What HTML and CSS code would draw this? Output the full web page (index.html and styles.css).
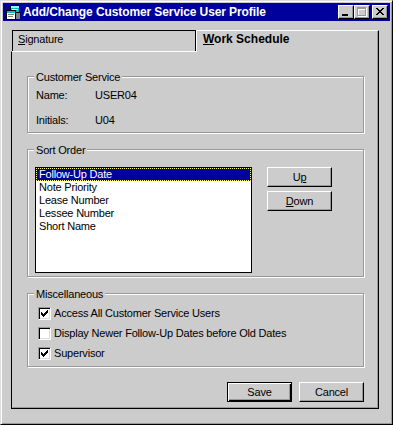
FILE: index.html
```html
<!DOCTYPE html>
<html>
<head>
<meta charset="utf-8">
<title>Add/Change Customer Service User Profile</title>
<link rel="stylesheet" href="styles.css">
</head>
<body>
<div class="window">
  <div class="titlebar">
    <svg class="app-icon" width="16" height="16" viewBox="0 0 16 16" shape-rendering="crispEdges">
      <rect x="5" y="1" width="10" height="8" fill="#000"/>
      <rect x="6" y="2" width="8" height="6" fill="#00c0c0"/>
      <rect x="6" y="2" width="8" height="2" fill="#80ffff"/>
      <rect x="7" y="5" width="6" height="1" fill="#fff"/>
      <rect x="1" y="6" width="10" height="10" fill="#000"/>
      <rect x="2" y="7" width="8" height="8" fill="#fff"/>
      <rect x="2" y="7" width="8" height="2" fill="#00c0c0"/>
      <rect x="3" y="10" width="6" height="1" fill="#808080"/>
      <rect x="3" y="12" width="5" height="1" fill="#808080"/>
      <rect x="11" y="9" width="4" height="6" fill="#808080"/>
    </svg>
    <span class="title">Add/Change Customer Service User Profile</span>
    <div class="ctrls">
      <span class="cbtn">
        <svg width="14" height="12" viewBox="0 0 14 12" shape-rendering="crispEdges"><rect x="3" y="8" width="6" height="2" fill="#000"/></svg>
      </span>
      <span class="cbtn">
        <svg width="14" height="12" viewBox="0 0 14 12" shape-rendering="crispEdges">
          <g fill="#fff" transform="translate(1,1)">
            <rect x="2" y="1" width="9" height="2"/><rect x="2" y="3" width="1" height="6"/><rect x="10" y="3" width="1" height="6"/><rect x="2" y="9" width="9" height="1"/>
          </g>
          <g fill="#999">
            <rect x="2" y="1" width="9" height="2"/><rect x="2" y="3" width="1" height="6"/><rect x="10" y="3" width="1" height="6"/><rect x="2" y="9" width="9" height="1"/>
          </g>
        </svg>
      </span>
      <span class="cbtn close">
        <svg width="14" height="12" viewBox="0 0 14 12" shape-rendering="crispEdges">
          <g fill="#000" transform="translate(3,2)">
            <rect x="0" y="0" width="2" height="1"/><rect x="6" y="0" width="2" height="1"/>
            <rect x="1" y="1" width="2" height="1"/><rect x="5" y="1" width="2" height="1"/>
            <rect x="2" y="2" width="4" height="1"/>
            <rect x="3" y="3" width="2" height="1"/>
            <rect x="2" y="4" width="4" height="1"/>
            <rect x="1" y="5" width="2" height="1"/><rect x="5" y="5" width="2" height="1"/>
            <rect x="0" y="6" width="2" height="1"/><rect x="6" y="6" width="2" height="1"/>
          </g>
        </svg>
      </span>
    </div>
  </div>

  <div class="client">
    <div class="tabs">
      <div class="tab"><u>S</u>ignature</div>
      <div class="tab active"><u>W</u>ork Schedule</div>
    </div>
    <div class="panel">
      <div class="group g-cust">
        <span class="legend">Customer Service</span>
        <div class="row"><span class="lbl">Name:</span><span>USER04</span></div>
        <div class="row"><span class="lbl">Initials:</span><span>U04</span></div>
      </div>

      <div class="group g-sort">
        <span class="legend">Sort Order</span>
        <div class="listbox">
          <div class="item sel">Follow-Up Date</div>
          <div class="item">Note Priority</div>
          <div class="item">Lease Number</div>
          <div class="item">Lessee Number</div>
          <div class="item">Short Name</div>
        </div>
        <div class="side-btns">
          <button class="btn">U<u>p</u></button>
          <button class="btn"><u>D</u>own</button>
        </div>
      </div>

      <div class="group g-misc">
        <span class="legend">Miscellaneous</span>
        <div class="check-row">
          <span class="chk">
            <svg width="11" height="11" viewBox="0 0 11 11" shape-rendering="crispEdges"><g fill="#000" transform="translate(2,2)"><rect x="6" y="0" width="1" height="1"/><rect x="5" y="1" width="2" height="1"/><rect x="0" y="2" width="1" height="1"/><rect x="4" y="2" width="3" height="1"/><rect x="0" y="3" width="2" height="1"/><rect x="3" y="3" width="3" height="1"/><rect x="0" y="4" width="5" height="1"/><rect x="1" y="5" width="3" height="1"/><rect x="2" y="6" width="1" height="1"/></g></svg>
          </span>
          <span>Access All Customer Service Users</span>
        </div>
        <div class="check-row">
          <span class="chk"></span>
          <span>Display Newer Follow-Up Dates before Old Dates</span>
        </div>
        <div class="check-row">
          <span class="chk">
            <svg width="11" height="11" viewBox="0 0 11 11" shape-rendering="crispEdges"><g fill="#000" transform="translate(2,2)"><rect x="6" y="0" width="1" height="1"/><rect x="5" y="1" width="2" height="1"/><rect x="0" y="2" width="1" height="1"/><rect x="4" y="2" width="3" height="1"/><rect x="0" y="3" width="2" height="1"/><rect x="3" y="3" width="3" height="1"/><rect x="0" y="4" width="5" height="1"/><rect x="1" y="5" width="3" height="1"/><rect x="2" y="6" width="1" height="1"/></g></svg>
          </span>
          <span>Supervisor</span>
        </div>
      </div>

      <div class="footer">
        <button class="btn default">Save</button>
        <button class="btn">Cancel</button>
      </div>
    </div>
  </div>
</div>
</body>
</html>
```

FILE: styles.css
```css
* { box-sizing: border-box; }
html, body { margin: 0; padding: 0; }
body {
  background: #cccccc;
  font-family: "Liberation Sans", Arial, sans-serif;
  font-size: 11px;
  line-height: 13px;
  letter-spacing: -0.2px;
  color: #000;
}
u { text-decoration: underline; text-underline-offset: 1px; }

.window {
  width: 393px;
  height: 425px;
  background: #cccccc;
  border: 1px solid;
  border-color: #dddddd #000 #000 #dddddd;
  box-shadow: inset 1px 1px 0 #fff, inset -1px -1px 0 #999;
  padding: 2px;
}

.titlebar {
  height: 18px;
  background: #00009c;
  display: flex;
  align-items: center;
  padding: 0 2px;
}
.app-icon { display: block; margin-right: 2px; flex: none; }
.title {
  flex: 1;
  color: #fff;
  font-weight: bold;
  font-size: 12px;
  line-height: 18px;
  letter-spacing: -0.1px;
  white-space: nowrap;
}
.ctrls { display: flex; }
.cbtn {
  width: 16px;
  height: 14px;
  background: #cccccc;
  border: 1px solid;
  border-color: #fff #000 #000 #fff;
  box-shadow: inset -1px -1px 0 #999;
  display: block;
}
.cbtn svg { display: block; }
.cbtn.close { margin-left: 2px; }

.client { padding: 9px 0 0 8px; }

.tabs { display: flex; height: 21px; margin-left: 1px; }
.tab {
  height: 21px;
  width: 184px;
  padding: 2px 0 0 5px;
  border-top: 1px solid #000;
  border-left: 1px solid #000;
  border-right: 1px solid #000;
}
.tab.active {
  position: relative;
  z-index: 1;
  width: 183px;
  height: 22px;
  margin-bottom: -1px;
  background: #cccccc;
  padding: 1px 0 0 6px;
  font-weight: bold;
  font-size: 12px;
  line-height: 14px;
  letter-spacing: 0;
  border-top: 1px solid #fff;
  border-left: 1px solid #fff;
  border-right: 1px solid #000;
  box-shadow: inset -1px 0 0 #999;
}

.panel {
  width: 368px;
  height: 358px;
  border-top: 1px solid #fff;
  border-left: 1px solid #000;
  border-right: 1px solid #000;
  border-bottom: 1px solid #000;
  box-shadow: inset -1px -1px 0 #999;
  padding: 24px 14px 0 15px;
}

.group {
  position: relative;
  border: 1px solid #999;
  box-shadow: 1px 1px 0 #fff, inset 1px 1px 0 #fff;
}
.legend {
  position: absolute;
  top: -6px;
  left: 6px;
  padding: 0 2px;
  background: #cccccc;
  white-space: nowrap;
}

.g-cust { padding: 12px 0 5px 8px; }
.row { display: flex; height: 13px; }
.row + .row { margin-top: 12px; }
.lbl { width: 59px; }

.g-sort {
  margin-top: 16px;
  padding: 17px 0 3px 7px;
  display: flex;
  gap: 15px;
  align-items: flex-start;
}
.listbox {
  width: 217px;
  height: 106px;
  border: 1px solid #000;
  background: #fff;
}
.item { height: 13px; padding-left: 3px; white-space: nowrap; }
.item.sel {
  background: #00009c;
  color: #fff;
  outline: 1px dotted #ffff80;
  outline-offset: -1px;
}
.side-btns { display: flex; flex-direction: column; gap: 4px; }

.btn {
  width: 65px;
  height: 20px;
  padding: 0;
  margin: 0;
  background: #cccccc;
  border: 1px solid;
  border-color: #fff #000 #000 #fff;
  box-shadow: inset -1px -1px 0 #999;
  font: inherit;
  letter-spacing: inherit;
  line-height: 18px;
  color: #000;
  text-align: center;
  display: block;
}
.btn.default {
  border: 1px solid #000;
  box-shadow: inset 1px 1px 0 #fff, inset -1px -1px 0 #000, inset -2px -2px 0 #999;
}

.g-misc { margin-top: 16px; padding: 13px 0 6px 10px; }
.check-row { display: flex; align-items: center; gap: 3px; height: 13px; white-space: nowrap; }
.check-row + .check-row { margin-top: 7px; }
.chk {
  width: 13px;
  height: 13px;
  flex: none;
  background: #fff;
  border: 1px solid;
  border-color: #999 #fff #fff #999;
  box-shadow: inset 1px 1px 0 #000, inset -1px -1px 0 #dddddd;
  display: block;
}
.chk svg { display: block; }

.footer {
  margin-top: 15px;
  display: flex;
  justify-content: flex-end;
  gap: 7px;
}
```
